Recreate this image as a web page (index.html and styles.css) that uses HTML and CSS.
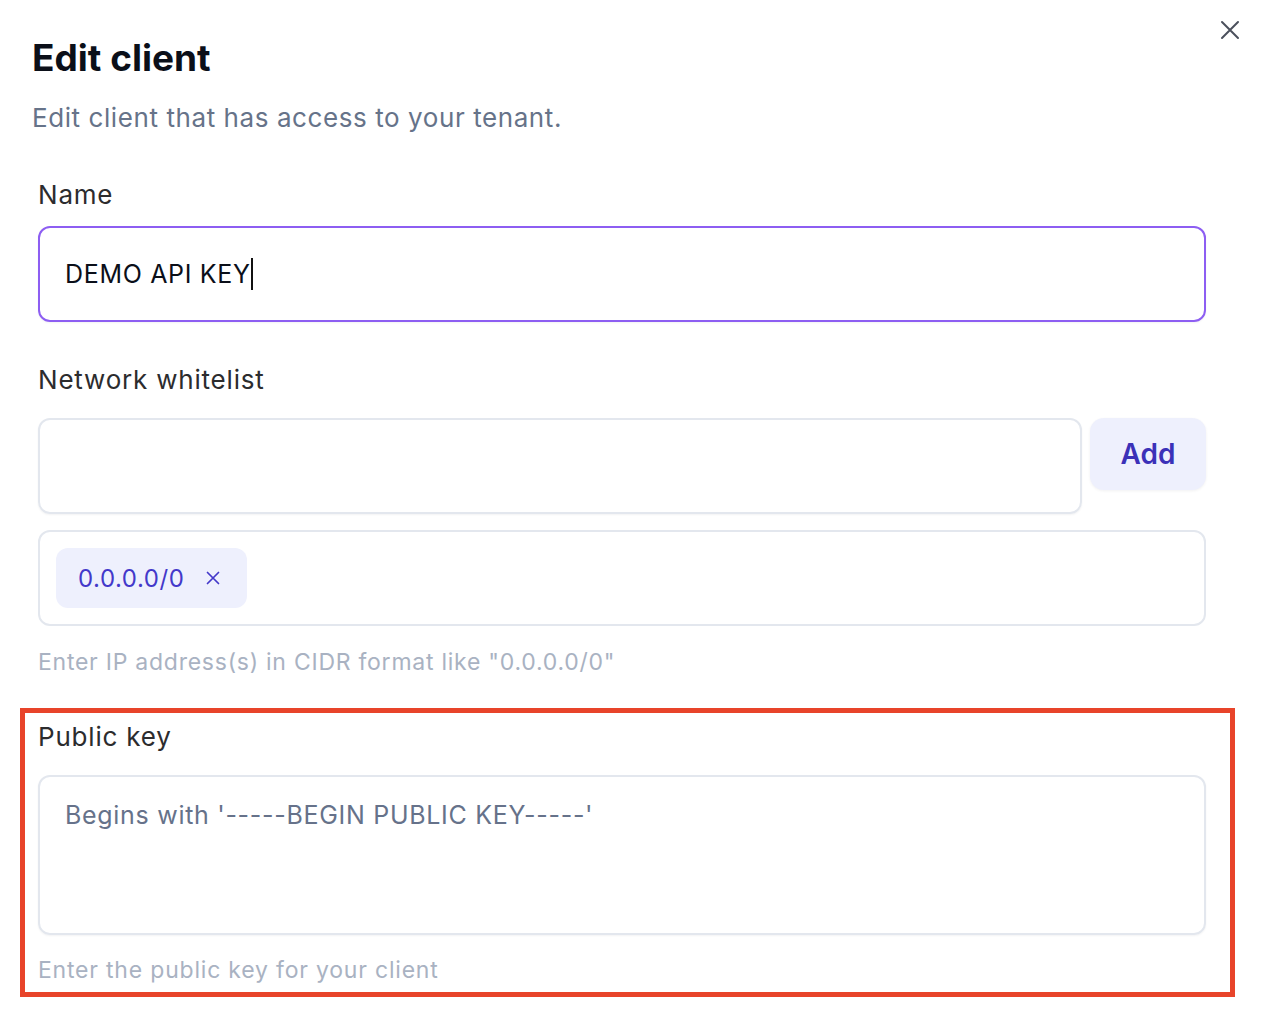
FILE: index.html
```html
<!DOCTYPE html>
<html lang="en">
<head>
<meta charset="utf-8">
<title>Edit client</title>
<link rel="stylesheet" href="styles.css">
</head>
<body>
<div class="modal">
  <button class="close" aria-label="Close">
    <svg width="20" height="20" viewBox="0 0 20 20" fill="none" stroke="#4b505c" stroke-width="2" stroke-linecap="round"><path d="M2 2L18 18M18 2L2 18"/></svg>
  </button>
  <header class="head">
    <h1 class="title">Edit client</h1>
    <p class="subtitle">Edit client that has access to your tenant.</p>
  </header>
  <form class="form">
    <div class="field field-name">
      <label class="label">Name</label>
      <div class="input input-focus"><span class="value">DEMO API KEY</span><span class="caret"></span></div>
    </div>
    <div class="field field-net">
      <label class="label">Network whitelist</label>
      <div class="row">
        <div class="input input-grow"></div>
        <button type="button" class="btn-add">Add</button>
      </div>
      <div class="tagbox">
        <span class="chip">0.0.0.0/0
          <svg class="chip-x" width="16" height="16" viewBox="0 0 16 16" fill="none" stroke="#4338ca" stroke-width="1.7" stroke-linecap="round"><path d="M2.5 2.5L13.5 13.5M13.5 2.5L2.5 13.5"/></svg>
        </span>
      </div>
      <p class="help">Enter IP address(s) in CIDR format like "0.0.0.0/0"</p>
    </div>
    <div class="field field-key highlight">
      <label class="label">Public key</label>
      <div class="textarea"><span class="placeholder">Begins with '-----BEGIN PUBLIC KEY-----'</span></div>
      <p class="help help-key">Enter the public key for your client</p>
    </div>
  </form>
</div>
</body>
</html>
```
FILE: styles.css
```css
* { box-sizing: border-box; }
html, body { margin: 0; padding: 0; background: #ffffff; }
body {
  font-family: Inter, "Noto Sans", "Liberation Sans", sans-serif;
  width: 1268px;
  height: 1012px;
  overflow: hidden;
}
.modal {
  position: relative;
  padding: 36px 62px 0 32px;
}
.close {
  position: absolute;
  top: 20px;
  right: 28px;
  width: 20px;
  height: 20px;
  padding: 0;
  border: 0;
  background: none;
  display: flex;
}
.head { display: flex; flex-direction: column; }
.title {
  margin: 0;
  font-size: 37px;
  line-height: 44px;
  font-weight: 700;
  color: #0b0f19;
  letter-spacing: 0;
}
.subtitle {
  margin: 20px 0 0;
  font-size: 26px;
  line-height: 36px;
  color: #667389;
  letter-spacing: 0.58px;
}
.form {
  display: flex;
  flex-direction: column;
  padding-left: 6px;
}
.field { display: flex; flex-direction: column; }
.label {
  font-size: 26px;
  line-height: 32px;
  color: #2c2c2e;
  letter-spacing: 0.8px;
}
.field-name { margin-top: 43px; }
.field-name .label { margin-bottom: 15px; }
.input {
  height: 96px;
  border: 2px solid #e3e7ee;
  border-radius: 12px;
  box-shadow: 0 1px 2px rgba(15, 23, 42, 0.05);
  display: flex;
  align-items: center;
  padding-left: 25px;
}
.input-focus { border-color: #8d5ef2; }
.value {
  font-size: 25px;
  color: #0b0f19;
  letter-spacing: 0.67px;
}
.caret {
  width: 2px;
  height: 32px;
  background: #111;
  margin-left: 0;
}
.field-net { margin-top: 42px; }
.field-net .label { margin-bottom: 22px; }
.row { display: flex; gap: 8px; align-items: flex-start; }
.input-grow { flex: 1; }
.btn-add {
  width: 116px;
  height: 72px;
  border: 0;
  border-radius: 14px;
  background: #eef0fd;
  color: #3b31b8;
  font-family: inherit;
  font-size: 28px;
  font-weight: 600;
  box-shadow: 0 1px 3px rgba(15, 23, 42, 0.06);
}
.tagbox {
  margin-top: 16px;
  height: 96px;
  border: 2px solid #e3e7ee;
  border-radius: 12px;
  display: flex;
  align-items: center;
  padding-left: 16px;
}
.chip {
  display: inline-flex;
  align-items: center;
  gap: 21px;
  height: 60px;
  padding: 0 26px 0 22px;
  background: #eef0fd;
  border-radius: 12px;
  color: #4338ca;
  font-size: 24px;
  letter-spacing: 0.55px;
}
.help {
  margin: 20px 0 0;
  font-size: 23px;
  line-height: 32px;
  color: #a9b2c2;
  letter-spacing: 0.75px;
}
.field-key {
  margin-top: 43px;
  position: relative;
}
.highlight::after {
  content: "";
  position: absolute;
  left: -18px;
  right: -29px;
  top: -13px;
  bottom: -11px;
  border: 5px solid #e8442a;
  pointer-events: none;
}
.field-key .label { margin-bottom: 22px; }
.textarea {
  height: 160px;
  border: 2px solid #e3e7ee;
  border-radius: 12px;
  box-shadow: 0 1px 2px rgba(15, 23, 42, 0.05);
  padding: 20px 25px;
}
.placeholder {
  font-size: 25px;
  line-height: 36px;
  color: #66728a;
  letter-spacing: 0.7px;
}
.help-key { margin-top: 19px; letter-spacing: 0.8px; }
```
